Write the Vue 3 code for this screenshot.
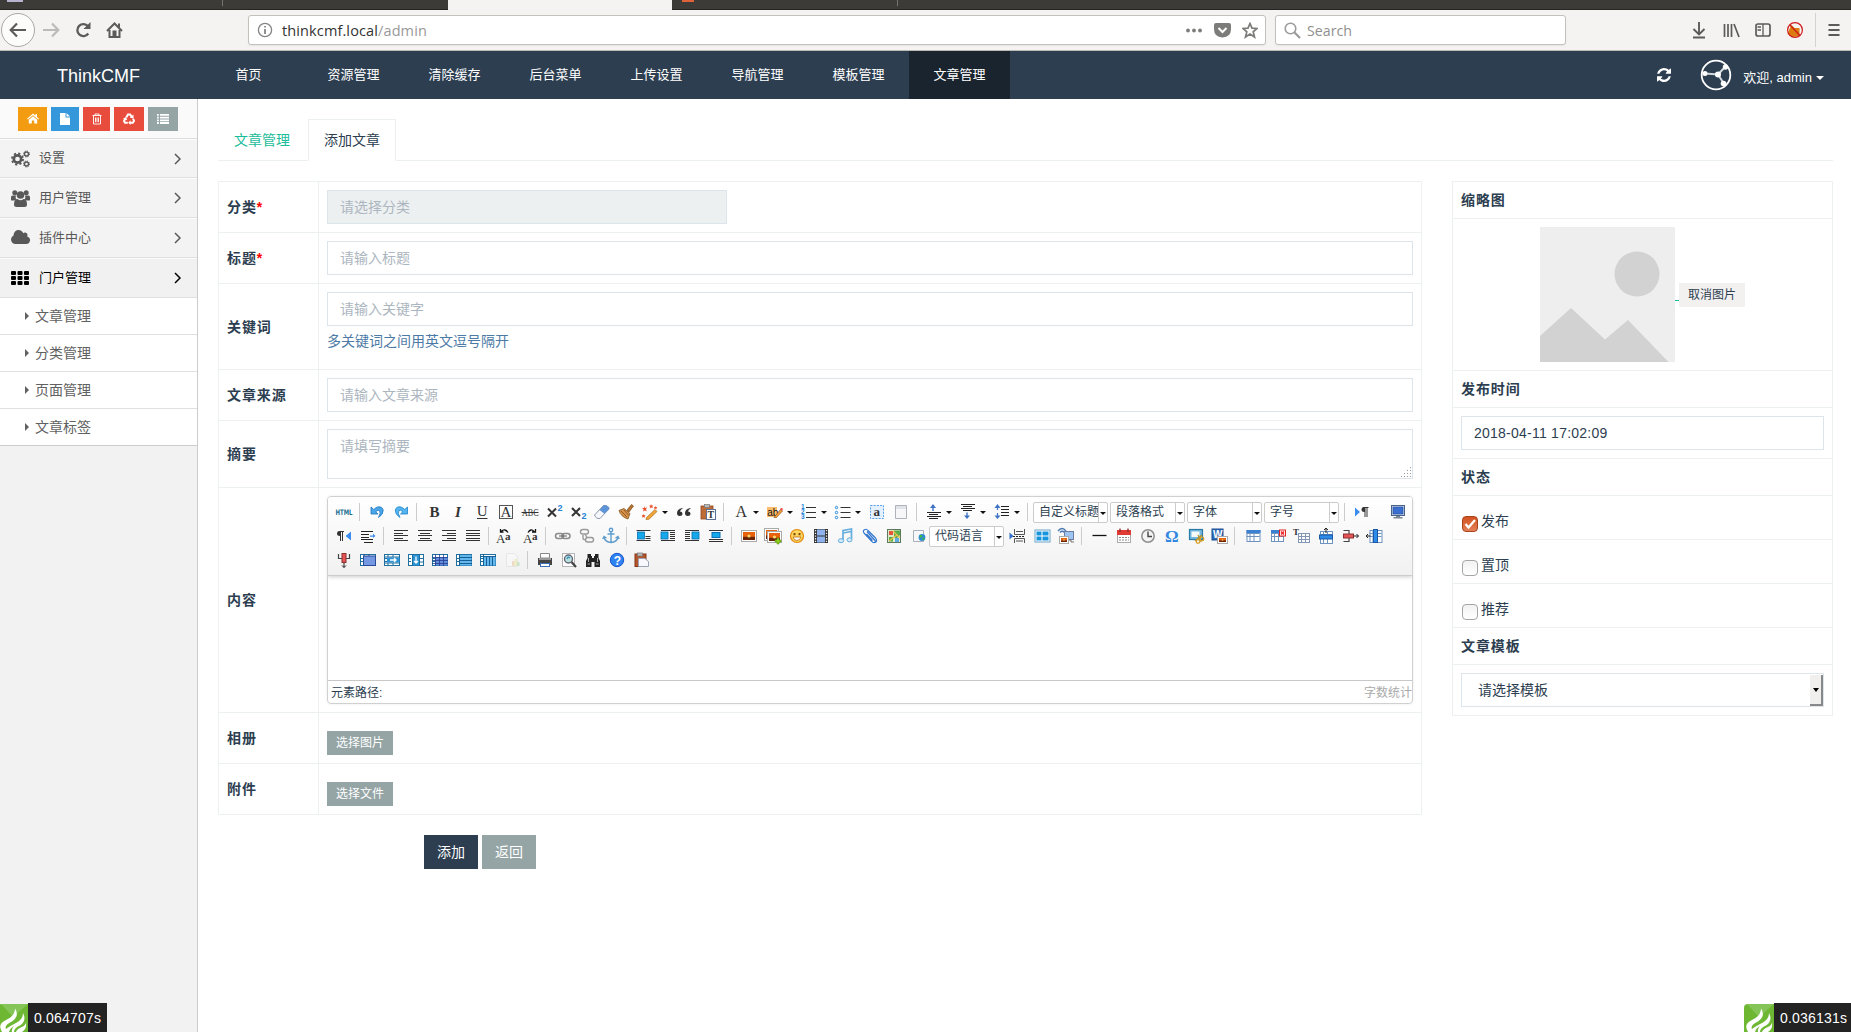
<script setup>
const navItems = ['首页', '资源管理', '清除缓存', '后台菜单', '上传设置', '导航管理', '模板管理', '文章管理']
const subItems = ['文章管理', '分类管理', '页面管理', '文章标签']

const gear = (x, y, r) =>
  `<circle cx="${x}" cy="${y}" r="${r}" fill="none" stroke="currentColor" stroke-width="${r * 0.72}"/><circle cx="${x}" cy="${y}" r="${r * 1.5}" fill="none" stroke="currentColor" stroke-width="${r * 0.5}" stroke-dasharray="${r * 0.59} ${r * 0.588}"/>`

const menuIcons = {
  cogs: gear(6.5, 9, 3.7) + gear(15.5, 4, 2) + gear(15.5, 14, 2),
  group: '<circle cx="3.8" cy="3.8" r="2.5"/><circle cx="15.2" cy="3.8" r="2.5"/><path d="M0 11V8.500Q0 6.500 1.500 6.500H5Q4 9 5.500 10.500L3.500 11.500H1.500Q0 11.500 0 11zM19 11V8.500Q19 6.500 17.500 6.500H14Q15 9 13.500 10.500L15.500 11.500H17.500Q19 11.500 19 11z"/><circle cx="9.500" cy="6" r="3.800"/><path d="M3 15.500Q3 10 6.500 10Q9.500 12.500 12.500 10Q16 10 16 15.500Q16 18 13.500 18H5.500Q3 18 3 15.500z"/>',
  cloud: '<path transform="translate(-.6,-.2) scale(.0099)" d="M1984 1152q0 159-112.500 271.500t-271.500 112.500h-1088q-185 0-316.500-131.500t-131.500-316.500q0-132 71-241.500t187-163.500q-2-28-2-43 0-212 150-362t362-150q158 0 286.500 88t187.500 230q70-62 166-62 106 0 181 75t75 181q0 75-41 138 129 30 213 134.500t84 239.500z"/>',
  th: [0, 1, 2].map(r => [0, 1, 2].map(c => `<rect x="${c * 6.5}" y="${2 + r * 5}" width="5" height="4" rx="1"/>`).join('')).join('')
}
const menu = [
  { icon: 'cogs', label: '设置' },
  { icon: 'group', label: '用户管理' },
  { icon: 'cloud', label: '插件中心' },
  { icon: 'th', label: '门户管理', active: true }
]

const quick = [
  { w: 29, c: '#f39c12', svg: '<path d="M6 0.500L0 5.700L.8 6.600L6 2.200L11.200 6.600L12 5.700L10 4V1H8.500V2.600z"/><path d="M1.800 6.700L6 3.200L10.200 6.700V10.500H7.200V7.500H4.800V10.500H1.800z"/>' },
  { w: 28, c: '#3498db', svg: '<path d="M1 0H6.500V4.500H11V12H1z"/><path d="M7.500 0L11 3.500H7.500z"/>' },
  { w: 27, c: '#e74c3c', svg: '<path d="M1.500 2.500H10.500M4 2.500V1H8V2.500M2.500 2.500V11H9.500V2.500M4.500 4.500V9.200M6 4.500V9.200M7.500 4.500V9.200" fill="none" stroke="#fff" stroke-width=".9"/>' },
  { w: 30, c: '#e74c3c', svg: '<path d="M3.200 4.500L5 1.500H7.200L8.800 4M10 5.500L11 8L9.800 9.800H7M4.800 9.800H2L1 8L2.300 5.500" fill="none" stroke="#fff" stroke-width="2"/><path d="M6.800 4.800L10.500 5.200V1.500zM7.500 7.300V12L5.200 9.800zM0 5.800L3 4L4.300 7.300z"/>' },
  { w: 30, c: '#95a5a6', svg: '<path d="M0 1H1.800V2.800H0zM3 1H12V2.800H3zM0 3.700H1.800V5.500H0zM3 3.700H12V5.500H3zM0 6.400H1.800V8.200H0zM3 6.400H12V8.200H3zM0 9.100H1.800V10.900H0zM3 9.100H12V10.900H3z"/>' }
]

// helpers for the editor toolbar glyphs (20 x 20 canvas)
const T = (x, y, s, t, extra = '') => `<text x="${x}" y="${y}" font-size="${s}" ${extra}>${t}</text>`
const serif = 'font-family="Liberation Serif" fill="#333"'
const lines = (arr, color = '#333') => arr.map(([x, y, w]) => `<rect x="${x}" y="${y}" width="${w}" height="1" fill="${color}"/>`).join('')
const shift = (dx, s) => `<g transform="translate(${dx},0)">${s}</g>`
const table = (fill, inner) =>
  `<rect x="2.500" y="4.500" width="15" height="11" fill="#fff" stroke="#1f6f9f"/><path d="M2 8.500H5M2 11.500H5" stroke="#1f6f9f"/>${fill}${inner}`
const grid = (x, y, w, h, c = '#6f93bf') =>
  `<rect x="${x + .5}" y="${y + .5}" width="${w}" height="${h}" fill="#fff" stroke="${c}"/><path d="M${x} ${y + 3.500}H${x + w}M${x} ${y + 6.500}H${x + w}M${x + 3.500} ${y}V${y + h}M${x + 7.500} ${y}V${y + h}" stroke="${c}" fill="none"/>`
const photo = (x, y, w, h) =>
  `<rect x="${x - 1.500}" y="${y - 1.500}" width="${w + 3}" height="${h + 3}" fill="#fff" stroke="#aaa"/><rect x="${x}" y="${y}" width="${w}" height="${h}" fill="#e8620c"/><rect x="${x}" y="${y + h * .6}" width="${w}" height="${h * .4}" fill="#6b2408"/><circle cx="${x + w * .5}" cy="${y + h * .5}" r="${h * .2}" fill="#ffd66b"/>`
const wrapImg = (x, l) => `<rect x="${x}" y="6" width="7" height="7" fill="#15a8ea" stroke="#0b6fb5" stroke-width=".8"/>` + lines(l)
const mark = '<path d="M0 0H6V1H5V10H4V1H3V10H2V5Q-1 5 -1 2.500Q-1 0 1 0z" fill="#333"/>'

const icons = {
  html: T(1.500, 13, 7.500, 'HTML', 'font-family="DejaVu Sans" font-weight="bold" fill="#1c7193" textLength="17" lengthAdjust="spacingAndGlyphs"'),
  undo: shift(1, '<path d="M3 5V12H10L7.700 9.800Q10 7.300 11.600 8.600Q13 11 10.500 15.500Q15.500 12.500 15.200 8Q14 4 9.500 5Q7.500 5.800 5.800 7.500z" fill="#4aa8ea" stroke="#1b74bd" stroke-width=".8"/>'),
  redo: shift(.5, '<path d="M16 5V12H9L11.300 9.800Q9 7.300 7.400 8.600Q6 11 8.500 15.500Q3.500 12.500 3.800 8Q5 4 9.500 5Q11.500 5.800 13.200 7.500z" fill="#55b5ee" stroke="#1b84cd" stroke-width=".8"/>'),
  bold: T(5.500, 15, 15, 'B', serif + ' font-weight="bold"'),
  italic: T(7, 15, 15, 'I', serif + ' font-style="italic" font-weight="bold"'),
  underline: T(4.700, 14, 15, 'U', serif) + '<path d="M5 16.500H15.500" stroke="#333"/>',
  fontborder: '<rect x="3.500" y="3.500" width="13" height="13" fill="none" stroke="#555"/>' + T(4.500, 15, 15, 'A', serif),
  strike: T(2, 14, 11, 'ABC', serif + ' textLength="16.500" lengthAdjust="spacingAndGlyphs"') + '<path d="M1.500 10.500H18.500" stroke="#333"/>',
  sup: '<path d="M4 6.500L12 14.500M12 6.500L4 14.500" stroke="#333" stroke-width="2"/>' + T(13.500, 9, 9, '2', 'font-family="Liberation Sans" font-weight="bold" fill="#2583d8"'),
  sub: '<path d="M4 6L12 14M12 6L4 14" stroke="#333" stroke-width="2"/>' + T(13.500, 17, 9, '2', 'font-family="Liberation Sans" font-weight="bold" fill="#2583d8"'),
  eraser: '<path d="M2.500 13L11.500 3.500Q14 2.500 17 5.500V7L8 16.500Q4 17 2.500 13z" fill="#f5f7fb" stroke="#8b96a8"/><path d="M7.500 8L11.500 3.500Q14 2.500 17 5.500V7L12.500 11.800z" fill="#5d93d8"/>',
  brush: '<path d="M11 8L15.500 2.500L17.500 4L13 10z" fill="#b5742f" stroke="#7e4b18" stroke-width=".7"/><path d="M3 8.500L8 6.500L14 11.500L12 17Q5 15 3 8.500z" fill="#d6924a" stroke="#82521c" stroke-width=".8"/><path d="M5 9L11 15M8 8L12.500 13" stroke="#7e4b18" stroke-width=".8"/>',
  wand: '<path d="M6.500 15.500L15 7.500L17 9.500L9 17.200L6 17.500z" fill="#f2a536" stroke="#a86b1d" stroke-width=".7"/><g fill="#e9532d"><path d="M4 4l1 2 2-.5-1 2 1 2-2-1-2 1 .6-2-1.600-1.500h2z"/><path d="M11 2l.7 1.500h1.600l-1 1.200.5 1.500-1.600-.8-1.500.8.400-1.500-1-1.200h1.500zM15.500 4l.5 1.100h1.200l-.7.900.2 1.300-1.200-.6-1.200.6.300-1.300-.9-.9h1.300z"/><path d="M3.500 12l.6 1.200h1.500l-.9 1 .4 1.600-1.500-.8-1.500.8.300-1.600-.9-1h1.400z"/></g>',
  quote: '<path d="M8.500 6Q3 7 3 11Q3 14 5.700 14Q8.500 14 8.500 11.500Q8.300 9.500 6 9.500Q6.500 7.500 8.500 6.800zM16.500 6Q11 7 11 11Q11 14 13.700 14Q16.500 14 16.500 11.500Q16.300 9.500 14 9.500Q14.500 7.500 16.500 6.800z" fill="#333"/>',
  pastetext: '<rect x="3" y="4" width="12" height="13" fill="#bd6c37" stroke="#93451e" stroke-width=".8"/><rect x="6.500" y="2.500" width="5" height="3" fill="#bbb" stroke="#777" stroke-width=".7"/><rect x="8.500" y="7.500" width="9" height="10" fill="#fff" stroke="#5a7298"/>' + T(9.500, 16, 10, 'T', serif + ' font-weight="bold"'),
  color: T(4.500, 14.500, 16, 'A', serif),
  back: '<rect x="2" y="5" width="10" height="10" fill="#fbbd6c"/>' + T(2.300, 13.500, 10, 'ab', 'font-family="Liberation Sans" fill="#111"') + '<path d="M9 15.500L15.500 7.500L17.500 9L11.500 15.500z" fill="#f2a536" stroke="#91532a" stroke-width=".7"/><circle cx="16.500" cy="7.300" r="1.300" fill="#e55"/>',
  ol: shift(1, [3, 8, 13].map((y, i) => T(1, y + 4, 6.500, i + 1, 'font-family="Liberation Sans" font-weight="bold" fill="#2583d8"')).join('') + lines([[6, 5, 10], [6, 10, 10], [6, 15, 10]])),
  ul: shift(.5, [5, 10, 15].map(y => `<circle cx="3" cy="${y + .5}" r="1.200" fill="#fff" stroke="#2583d8"/>`).join('') + lines([[7, 5, 10], [7, 10, 10], [7, 15, 10]])),
  selall: '<rect x="3.500" y="3.500" width="13" height="13" fill="#e2f0ff" stroke="#5a9fe8" stroke-dasharray="2 1.200"/>' + T(6.500, 13.500, 13, 'a', serif + ' font-weight="bold"'),
  page: '<path d="M4.500 3.500H15.500V16.500H4.500z" fill="#f7f7f9" stroke="#aeb2ba"/><path d="M5 4H15V7H5z" fill="#dfe3ea"/>',
  rowup: shift(1, '<path d="M8 2L5 6H7.300V9H8.700V6H11z" fill="#3f73c4"/>' + lines([[2, 10, 14], [4, 12, 9], [2, 14, 14], [4, 16, 9]], '#222')),
  rowdown: shift(1, lines([[2, 2, 14], [4, 4, 9], [2, 6, 14], [4, 8, 9]], '#222') + '<path d="M8 17L5 13.500H7.300V10.500H8.700V13.500H11z" fill="#3f73c4"/>'),
  lineh: shift(.5, '<path d="M5 2L2 6H4.400V8H5.600V6H8zM5 17L2 13.500H4.400V11H5.600V13.500H8z" fill="#3f73c4"/>' + lines([[8.500, 4, 8], [8.500, 7, 8], [8.500, 10, 8], [8.500, 13, 8]], '#222')),
  ltr: '<path d="M3 5.500L8 10L3 14.500z" fill="#3c8df0"/><g transform="translate(10.500,5)">' + mark + '</g>',
  rtl: '<g transform="translate(4,5)">' + mark + '</g><path d="M17 5.500L11.500 10L17 14.500z" fill="#3c8df0"/>',
  monitor: '<rect x="3.500" y="3.500" width="13" height="10" fill="#c9d7ea" stroke="#4a6386"/><rect x="5" y="5" width="10" height="7" fill="#3a6fd0" stroke="#234a99" stroke-width=".6"/><path d="M8 14H12V15H14.500V16.500H5.500V15H8z" fill="#7b8797"/>',
  indent: lines([[3, 5, 12], [3, 8, 8], [3, 11, 8], [3, 13, 12], [6, 16, 9]], '#222') + '<path d="M12 9.500H15V7.500L17.500 10L15 12V10.700H12z" fill="#3c8df0"/>',
  left: lines([[3, 4, 14], [3, 7, 9], [3, 9, 14], [3, 12, 9], [3, 14, 14]]),
  center: lines([[3, 4, 14], [5, 7, 10], [3, 9, 14], [5, 12, 10], [3, 14, 14]]),
  right: lines([[3, 4, 14], [8, 7, 9], [3, 9, 14], [8, 12, 9], [3, 14, 14]]),
  justify: lines([[3, 4, 14], [3, 7, 14], [3, 9, 14], [3, 12, 14], [3, 14, 14]]),
  upper: T(0, 16.500, 13, 'A', serif) + T(9, 13.500, 11, 'a', serif + ' font-weight="bold"') + '<path d="M5 5.500Q9 2 12 6.500M4.500 3V6H7.500" fill="none" stroke="#111" stroke-width="1.300"/>',
  lower: T(3, 16.500, 13, 'A', serif) + T(12, 13.500, 11, 'a', serif + ' font-weight="bold"') + '<path d="M14 5.500Q11 2 8 6.500M15.500 3V6H12" fill="none" stroke="#111" stroke-width="1.300"/>',
  link: '<g fill="none" stroke="#8c8c8c" stroke-width="1.500"><rect x="2.500" y="7.500" width="8" height="5" rx="2.500"/><rect x="9" y="7.500" width="8" height="5" rx="2.500"/></g><path d="M6 10H14" stroke="#666"/>',
  unlink: '<g fill="none" stroke="#999" stroke-width="1.400"><rect x="3.500" y="3.500" width="8" height="4.500" rx="2.200"/><path d="M8 8L10 11.500"/><rect x="8.500" y="11.500" width="8" height="4.500" rx="2.200"/><path d="M6 9V12Q6 14 8.500 13.500"/></g>',
  anchor: '<g fill="none" stroke="#5f9dce" stroke-width="1.400"><circle cx="10" cy="4" r="1.700"/><path d="M10 6V16.500M6.500 8H13.500M3 11Q4 16 10 16.500Q16 16 17 11M1.800 13L3 10.500L5.500 12M18.200 13L17 10.500L14.500 12"/></g>',
  imgnone: shift(.5, wrapImg(3, [[2, 4, 14], [11, 10, 5], [11, 12, 5], [2, 14, 14]])),
  imgleft: wrapImg(3, [[3, 4, 14], [12, 6, 5], [12, 8, 5], [12, 10, 5], [12, 12, 5], [3, 14, 14]]),
  imgright: wrapImg(10, [[3, 4, 14], [3, 6, 5], [3, 8, 5], [3, 10, 5], [3, 12, 5], [3, 14, 14]]),
  imgcenter: '<rect x="6" y="6.500" width="8" height="5" fill="#15a8ea" stroke="#0b6fb5"/>' + lines([[3, 4, 14], [3, 13, 14], [3, 15, 14]]),
  image: photo(4, 6, 12, 8),
  images: photo(3, 4, 11, 9) + photo(6, 7, 11, 8) + '<path d="M14 12H16V14H18V16H16V18H14V16H12V14H14z" fill="#8fd01a" stroke="#5c970b" stroke-width=".6"/>',
  smile: '<circle cx="10" cy="10" r="6.500" fill="#fdd65e" stroke="#e2880f" stroke-width="1.200"/><path d="M6.500 7H8.500V9.200H6.500zM11.500 7H13.500V9.200H11.500z" fill="#82480a"/><path d="M6 11H14Q13 14.500 10 14.500Q7 14.500 6 11z" fill="#fff" stroke="#b86a0a" stroke-width=".8"/>',
  film: '<rect x="3" y="3" width="14" height="14" fill="#333"/><rect x="6" y="3.500" width="8" height="6" fill="#8fb2ec"/><rect x="6" y="10.500" width="8" height="6" fill="#8fb2ec"/><path d="M4.500 4V16.500M15.500 4V16.500" stroke="#eee" stroke-width="1.300" stroke-dasharray="1.300 1.400"/>',
  music: shift(.5, '<g fill="none" stroke="#66aede" stroke-width="1.700"><path d="M7.500 14V4.500L16 3V13M7.500 7L16 5.500"/></g><ellipse cx="5.500" cy="14.700" rx="2.700" ry="2" fill="#d3ebfc" stroke="#66aede"/><ellipse cx="14" cy="13.800" rx="2.500" ry="2" fill="#d3ebfc" stroke="#66aede"/>'),
  clip: shift(1, '<path d="M7 5.500L14.500 14Q16 16 14.500 16.500Q13 17 12 15.500L4 7Q2.500 5 4.500 3.700Q6.500 2.500 8 4.500L15.500 12Q17.500 14.500 15.500 16.500M6.500 8L12.500 14.500" fill="none" stroke="#3377cf" stroke-width="1.200"/>'),
  map: shift(1, '<rect x="3.500" y="3.500" width="13" height="13" fill="#dcebc8" stroke="#5d785c"/><rect x="5" y="5" width="4" height="4" fill="#e5543a"/><path d="M10 4.500H16V9L12 13L10 10zM5 11H9V15.500H5z" fill="#58ad4e"/><path d="M9 5L16 12M5 15L13 9" stroke="#f0be48" stroke-width="1.200"/><rect x="11" y="12" width="4" height="4" fill="#5faae2"/>'),
  gmap: shift(2, '<path d="M4.500 4.500H14.500V15.500H4.500z" fill="#f8f8fb" stroke="#aab0bb"/><circle cx="13" cy="11.500" r="3.400" fill="#2b8bd8"/><path d="M11 9Q13.500 8 13.500 10.500Q12 12.500 10.500 11.500zM13.500 12Q16 10.500 15.500 13L13.500 14.500z" fill="#46b548"/>'),
  pagebreak: '<path d="M1.500 6.500V13.500L5.500 10z" fill="#2e6fc8"/><path d="M6.500 3V8.500H16.500V3M6.500 17V12.500H16.500V17M8 5.500H15M8 15H15" fill="none" stroke="#555"/><path d="M5 10.500H17" stroke="#222" stroke-dasharray="2 1"/>',
  template: '<rect x="3" y="4" width="15" height="12" fill="#fff" stroke="#6aa4c8"/><rect x="4.500" y="5.500" width="5" height="4" fill="#1595dd"/><rect x="4.500" y="10.500" width="5" height="4" fill="#1595dd"/><rect x="10.500" y="5.500" width="6" height="4" fill="#1595dd"/><rect x="10.500" y="10.500" width="6" height="4" fill="#1595dd"/>',
  background: '<path d="M2 5Q6 0 10 5M4 6.500Q6 4 8.500 6.500" fill="none" stroke="#4776b2" stroke-width="1.300"/><rect x="8.500" y="5.500" width="9" height="8" fill="#9ec5f2" stroke="#6b7fa5"/><path d="M11 14H15V16H18" stroke="#777" fill="none"/>' + photo(5, 12, 6, 4),
  hr: '<path d="M3.500 9.500H17.500" stroke="#111" stroke-width="1.300"/>',
  date: shift(1, '<rect x="3.500" y="4.500" width="13" height="12" fill="#fff" stroke="#aaa"/><path d="M3 4H17V9H3z" fill="#e03a35"/><path d="M6 2.500V6M14 2.500V6" stroke="#8b2a2a" stroke-width="1.300"/><path d="M5 11.500H15M5 14H15" stroke="#888" stroke-dasharray="2 1"/>'),
  time: shift(1, '<circle cx="10" cy="10" r="6.200" fill="#f3f3f3" stroke="#8e8e8e" stroke-width="1.500"/><path d="M10 5.500V10.500H14" fill="none" stroke="#444" stroke-width="1.400"/>'),
  omega: T(4, 16, 17, 'Ω', 'font-family="Liberation Serif" font-weight="bold" fill="#3187e1"'),
  snap: shift(1, '<rect x="3.500" y="3.500" width="13" height="10" fill="#74b9df" stroke="#287ba6" stroke-width="1.200"/><rect x="5.500" y="5.500" width="8" height="5.500" fill="#f7fbfc"/><path d="M9 15L16 9M12 9L15 16" stroke="#b78d2d" stroke-width="1.200"/><circle cx="12" cy="15.500" r="1.800" fill="none" stroke="#d6a128" stroke-width="1.300"/><circle cx="16" cy="13" r="1.800" fill="none" stroke="#d6a128" stroke-width="1.300"/>'),
  word: '<rect x="3" y="3" width="11" height="11" fill="#2d6db9" stroke="#1b4d90"/>' + T(4, 12, 10, 'W', 'font-family="Liberation Sans" font-weight="bold" fill="#fff"') + photo(10, 12, 7, 4),
  table: shift(1.5, grid(3, 4, 13, 11) + '<path d="M3 4H17V7H3z" fill="#3a81d3"/>'),
  deltable: shift(3, grid(2, 4, 12, 11) + '<path d="M2 4H11V7H2z" fill="#3a81d3"/><rect x="10.500" y="4" width="6" height="6" fill="#fff" stroke="#d22" stroke-width="1"/><path d="M12 5.500L15 8.500M15 5.500L12 8.500" stroke="#e22" stroke-width="1.500"/>'),
  ttable: shift(2, grid(6, 7, 11, 9, '#8496b5') + T(1, 9, 9, 'T', serif + ' font-weight="bold"')),
  insrow: shift(2, grid(4, 5, 12, 12) + '<rect x="3.500" y="9" width="13" height="4" fill="#2d8bea" stroke="#1858a5"/><path d="M10 7V2M8 4L10 2L12 4" fill="none" stroke="#222"/>'),
  delrow: shift(2.5, '<path d="M3 4.500H8.500V8M3 15.500H8.500V12" fill="none" stroke="#444" stroke-width="1.200"/><rect x="3" y="8" width="10" height="4" fill="#e55556" stroke="#8e3030"/><path d="M13 10H18M16 8L18 10L16 12" fill="none" stroke="#222"/>'),
  inscol: shift(2.5, grid(5, 4, 12, 12) + '<rect x="9" y="3.500" width="4" height="13" fill="#2d8bea" stroke="#1858a5"/><path d="M6 10H1.500M3.500 8L1.500 10L3.500 12" fill="none" stroke="#222"/>'),
  delcol: '<path d="M4.500 4V8.500H8M15.500 4V8.500H12" fill="none" stroke="#444" stroke-width="1.200"/><rect x="8" y="3.500" width="4" height="9" fill="#e55556" stroke="#8e3030"/><path d="M10 13V17.500M8 15.500L10 17.500L12 15.500" fill="none" stroke="#222"/>',
  m1: table('<rect x="5.500" y="6" width="12" height="9.500" fill="#7499e2" stroke="#294b99"/>', '<path d="M6 4V6M11 4V6" stroke="#294b99"/>'),
  m2: table('<rect x="5" y="7.500" width="12.500" height="5" fill="#2b93d6"/>', '<path d="M2 7H18M2 13H18M6 4V7M11 4V7M6 13V16M11 13V16" stroke="#1f6f9f"/><path d="M8 10H14M12 8L14 10L12 12" fill="none" stroke="#fff" stroke-width="1.300"/>'),
  m3: table('<rect x="6.500" y="5" width="7" height="10.500" fill="#2b93d6"/>', '<path d="M6.500 4V16M13.500 4V16M14 8.500H18M14 12H18" stroke="#1f6f9f"/><path d="M10 6.500V13M8 11L10 13L12 11" fill="none" stroke="#fff" stroke-width="1.300"/>'),
  m4: table('<rect x="5" y="7" width="12.500" height="8.500" fill="#658bda"/>', '<path d="M2 7.500H18M2 10.500H18M2 13.500H18M5.500 4V16M9.500 4V16M13.500 4V16" stroke="#223f90" stroke-width=".8"/>'),
  m5: table('<rect x="5" y="5" width="12.500" height="10.500" fill="#62b7ed"/>', '<path d="M5.500 4V16M5 7.500H18M5 10.500H18M5 13.500H18" stroke="#155f96"/>'),
  m6: table('<rect x="5" y="7" width="12.500" height="8.500" fill="#62b7ed"/>', '<path d="M2 6.500H18M5.500 4V16M8.500 7V16M11.500 7V16M14.500 7V16" stroke="#155f96"/>'),
  chart: '<g opacity=".3"><path d="M4.500 3.500H12.500L15.500 7V16.500H4.500z" fill="#fff" stroke="#ccc"/><rect x="10" y="11" width="2.500" height="5" fill="#e9a35d"/><rect x="12.500" y="9" width="2.500" height="7" fill="#e3dc5e"/><rect x="15" y="12" width="2.500" height="4" fill="#6fc072"/></g>',
  print: '<path d="M5.500 3.500H14.500V8H5.500z" fill="#fff" stroke="#888"/><path d="M3 8H17V15H3z" fill="#444"/><path d="M4 8H16V10H4z" fill="#999"/><rect x="5.500" y="13.500" width="9" height="3" fill="#fff" stroke="#3b6eb2"/>',
  preview: '<rect x="3.500" y="3.500" width="12" height="13" fill="#fff" stroke="#b5b5b5"/><circle cx="9.500" cy="9" r="4" fill="#b9e2dc" stroke="#667" stroke-width="1.400"/><path d="M8 9Q9 6 11 8" stroke="#3b96c5" fill="none" stroke-width="1.500"/><path d="M12.500 12L17 17" stroke="#444" stroke-width="2.200"/>',
  find: '<path d="M4.500 4H8V6H9V8H11V6H12V4H15.500V8L17 11V17H11.500V12H8.500V17H3V11L4.500 8z" fill="#222"/><path d="M5.500 8V12M14.500 8V12M4.500 14H7M13 14H15.500" stroke="#aaa"/>',
  help: '<circle cx="10" cy="10" r="6.700" fill="#2f82f2" stroke="#1556ca"/>' + T(6.800, 14.500, 12, '?', 'font-family="Liberation Sans" font-weight="bold" fill="#fff"'),
  paste: '<rect x="4" y="4" width="11" height="12.500" fill="#b3562b" stroke="#843715"/><rect x="6.500" y="3" width="5" height="3" fill="#bbb" stroke="#777" stroke-width=".7"/><path d="M7.500 8.500H14L17.500 11.500V16.500H7.500z" fill="#f8f9fc" stroke="#9ca3b4"/>'
}

// "|" separator, "name+" button with drop-down arrow, "=text" combo box, ">" spacer
const rows = [
  'html | undo redo | bold italic underline fontborder strike sup sub eraser brush wand+ quote pastetext | color+ back+ ol+ ul+ selall page | rowup+ rowdown+ lineh+ | =自定义标题 =段落格式 =字体 =字号 | ltr > monitor',
  'rtl indent | left center right justify | upper lower | link unlink anchor | imgnone imgleft imgright imgcenter | image images smile film music clip map gmap =代码语言 pagebreak template background | hr date time omega snap word | table deltable ttable insrow delrow inscol',
  'delcol m1 m2 m3 m4 m5 m6 chart | print preview find help paste'
].map(r => r.split(' ').map(t => {
  if (t === '|') return { type: 'sep' }
  if (t === '>') return { type: 'gap' }
  if (t[0] === '=') return { type: 'combo', text: t.slice(1) }
  return { type: 'btn', name: t.replace('+', ''), drop: t.endsWith('+') }
}))
</script>

<template>
  <div class="screen">
    <div class="tabstrip">
      <div class="tabs-left"><i class="frag"></i><i class="tsep"></i></div>
      <div class="tab-current"></div>
      <div class="tabs-right"><i class="fav"></i><i class="tsep"></i></div>
    </div>

    <div class="chrome">
      <div class="back">
        <svg width="18" height="16" viewBox="0 0 18 16"><path d="M17 8H2M8 1.500L1.700 8L8 14.500" fill="none" stroke="#5c5b58" stroke-width="2.200" /></svg>
      </div>
      <svg class="fwd" width="18" height="16" viewBox="0 0 18 16"><path d="M1 8H16M10 1.500L16.300 8L10 14.500" fill="none" stroke="#bdbbb8" stroke-width="2.200" /></svg>
      <svg class="reload" width="17" height="16" viewBox="0 0 17 16"><path d="M13.300 11.500A6 6 0 1 1 13 4.300" fill="none" stroke="#5c5b58" stroke-width="2.300" /><path d="M15.500 0V7H8.500z" fill="#5c5b58" /></svg>
      <svg class="house" width="17" height="17" viewBox="0 0 17 17"><path d="M1 9L8.500 1.500L16 9" fill="none" stroke="#5c5b58" stroke-width="2" /><path d="M3.500 8V15H13.500V8" fill="none" stroke="#5c5b58" stroke-width="2" /><path d="M6.500 8.500H10.500V15H6.500zM12 1.500H14V6L12 4z" fill="#5c5b58" /></svg>
      <div class="urlbar">
        <svg width="16" height="16" viewBox="0 0 16 16"><circle cx="8" cy="8" r="6.600" fill="none" stroke="#858585" stroke-width="1.300" /><path d="M8 7V12M8 4V5.500" stroke="#858585" stroke-width="1.800" /></svg>
        <span class="url">thinkcmf.local<em>/admin</em></span>
        <svg class="dots" width="16" height="5" viewBox="0 0 16 5"><circle cx="2" cy="2.500" r="1.900" /><circle cx="8" cy="2.500" r="1.900" /><circle cx="14" cy="2.500" r="1.900" /></svg>
        <svg class="pocket" width="17" height="15" viewBox="0 0 17 15"><path d="M2 0H15Q17 0 17 2V6Q17 14 8.500 14.500Q0 14 0 6V2Q0 0 2 0z" fill="#7c7c7a" /><path d="M4.500 5L8.500 9L12.500 5" fill="none" stroke="#fff" stroke-width="2" /></svg>
        <svg class="star" width="16" height="17" viewBox="0 0 16 17"><path d="M8 1.500L10 6.200L15 6.500L11.200 9.800L12.500 15L8 12L3.500 15L4.800 9.800L1 6.500L6 6.200z" fill="none" stroke="#7c7c7a" stroke-width="1.700" /></svg>
      </div>
      <div class="search">
        <svg width="17" height="17" viewBox="0 0 17 17"><circle cx="6.500" cy="6.500" r="5.300" fill="none" stroke="#9b9b9b" stroke-width="1.600" /><path d="M10.300 10.300L16 16" stroke="#9b9b9b" stroke-width="2.200" /></svg>
        <span>Search</span>
      </div>
      <svg class="tools" width="158" height="36" viewBox="0 0 158 36">
        <g fill="none" stroke="#5c5b58" stroke-width="1.900">
          <path d="M12 10V22.500M6.500 17L12 22.500L17.500 17M6 25.500H18" />
          <path d="M37.500 12V25M41 12V25M44.500 12V25M47 12L52 25" stroke-width="1.700" />
          <rect x="69" y="12" width="14" height="12" rx="2" stroke-width="1.700" /><path d="M76 12V24M70.500 15H74M70.500 18H74" stroke-width="1.300" />
          <path d="M141.500 13H152.500M141.500 18H152.500M141.500 23H152.500" />
        </g>
        <path d="M102.500 17L104.500 13L107.500 16H112.500V24L105.500 25L100.500 22z" fill="#dc7b0e" />
        <circle cx="108" cy="18" r="7.400" fill="none" stroke="#cf1a1a" stroke-width="1.200" /><path d="M103 13L113 23.500" stroke="#cf1a1a" stroke-width="1.300" />
        <path d="M128.500 1V35" stroke="#d5d2cf" />
      </svg>
    </div>

    <header>
      <div class="brand">ThinkCMF</div>
      <nav><a v-for="(n, i) in navItems" :key="n" :class="{ first: i === 0, on: i === 7 }">{{ n }}</a></nav>
      <svg class="refresh" width="14" height="14" viewBox="0 0 1536 1536"><path fill="#fff" d="M1511 928q0 5-1 7-64 268-268 434.500t-478 166.500q-146 0-282.500-55t-243.500-157l-129 129q-19 19-45 19t-45-19-19-45v-448q0-26 19-45t45-19h448q26 0 45 19t19 45-19 45l-137 137q71 66 161 102t187 36q134 0 250-65t186-179q11-17 53-117 8-23 30-23h192q13 0 22.500 9.500t9.500 22.500zm25-800v448q0 26-19 45t-45 19h-448q-26 0-45-19t-19-45 19-45l138-138q-148-137-349-137-134 0-250 65t-186 179q-11 17-53 117-8 23-30 23h-199q-13 0-22.500-9.500t-9.500-22.500v-7q65-268 270-434.500t480-166.500q146 0 284 55.500t245 156.500l130-129q19-19 45-19t45 19 19 45z" /></svg>
      <svg class="avatar" width="32" height="32" viewBox="0 0 32 32"><circle cx="16" cy="16" r="14.300" fill="none" stroke="#fff" stroke-width="1.800" /><path d="M5 14.500L18 15.500L25 8M18 15.500L23.500 24" fill="none" stroke="#d5dade" stroke-width="2" /><circle cx="5" cy="14.500" r="2.500" fill="#fff" /><circle cx="18" cy="15.500" r="3" fill="#fff" /><circle cx="25.500" cy="8" r="2.700" fill="#fff" /><circle cx="23.500" cy="24.500" r="2.800" fill="#fff" /></svg>
      <span class="hello">欢迎, admin</span><i class="caret"></i>
    </header>

    <div class="body">
      <aside>
        <div class="quick">
          <span v-for="(q, i) in quick" :key="i" :style="{ width: q.w + 'px', background: q.c }">
            <svg width="12" height="12" viewBox="0 0 12 12" fill="#fff" v-html="q.svg"></svg>
          </span>
        </div>
        <div v-for="m in menu" :key="m.label" class="item" :class="{ active: m.active }">
          <svg class="mi" width="19" height="18" viewBox="0 0 19 18" fill="currentColor" v-html="menuIcons[m.icon]"></svg>
          <span>{{ m.label }}</span>
          <svg class="chev" width="7" height="12" viewBox="0 0 7 12"><path d="M1 1L6 6L1 11" fill="none" stroke="currentColor" stroke-width="1.500" /></svg>
        </div>
        <div v-for="s in subItems" :key="s" class="sub"><i></i><span>{{ s }}</span></div>
      </aside>

      <main>
        <div class="tabs"><a>文章管理</a><a class="cur">添加文章</a></div>
        <div class="cols">
          <div class="left">
            <div class="form">
              <div class="row" style="height: 51px"><label>分类<b>*</b></label><div class="cell"><div class="input short">请选择分类</div></div></div>
              <div class="row" style="height: 51px"><label>标题<b>*</b></label><div class="cell"><div class="input">请输入标题</div></div></div>
              <div class="row" style="height: 86px"><label>关键词</label><div class="cell"><div class="input">请输入关键字</div><p>多关键词之间用英文逗号隔开</p></div></div>
              <div class="row" style="height: 51px"><label>文章来源</label><div class="cell"><div class="input">请输入文章来源</div></div></div>
              <div class="row" style="height: 67px"><label>摘要</label><div class="cell"><div class="input area">请填写摘要
                <svg width="12" height="12" viewBox="0 0 12 12"><path d="M10 1h1v1h-1zM7 4h1v1h-1zM10 4h1v1h-1zM4 7h1v1h-1zM7 7h1v1h-1zM10 7h1v1h-1zM1 10h1v1h-1zM4 10h1v1h-1zM7 10h1v1h-1zM10 10h1v1h-1z" fill="#999" /></svg></div></div></div>
              <div class="row" style="height: 225px"><label>内容</label>
                <div class="cell">
                  <div class="editor">
                    <div class="toolbar">
                      <div v-for="(r, ri) in rows" :key="ri" class="trow">
                        <template v-for="(t, i) in r" :key="i">
                          <i v-if="t.type === 'sep'" class="sep"></i>
                          <i v-else-if="t.type === 'gap'" class="gap"></i>
                          <span v-else-if="t.type === 'combo'" class="combo"><span>{{ t.text }}</span><u></u></span>
                          <span v-else class="tb" :class="{ drop: t.drop }"><svg width="20" height="20" viewBox="0 0 20 20" v-html="icons[t.name]"></svg><i v-if="t.drop"></i></span>
                        </template>
                      </div>
                    </div>
                    <div class="paper"></div>
                    <div class="status"><span>元素路径:</span><em>字数统计</em></div>
                  </div>
                </div>
              </div>
              <div class="row" style="height: 51px"><label>相册</label><div class="cell btns"><span class="btn-sm">选择图片</span></div></div>
              <div class="row" style="height: 51px"><label>附件</label><div class="cell btns"><span class="btn-sm">选择文件</span></div></div>
            </div>
            <div class="actions"><span class="go">添加</span><span>返回</span></div>
          </div>

          <div class="side">
            <div class="h">缩略图</div>
            <div class="thumb">
              <svg width="135" height="135" viewBox="0 0 135 135"><rect width="135" height="135" fill="#eee" /><circle cx="97" cy="47" r="22.500" fill="#d2d2d2" /><path d="M0 109L31 81L65 112.500L88 93L128.500 135H0z" fill="#d2d2d2" /></svg>
              <i></i><span>取消图片</span>
            </div>
            <div class="h">发布时间</div>
            <div class="c"><div class="input date">2018-04-11 17:02:09</div></div>
            <div class="h">状态</div>
            <div class="ck"><i class="on"><svg width="16" height="16" viewBox="0 0 16 16"><path d="M3.500 8L6.500 11.500L13 4" fill="none" stroke="#fff" stroke-width="2.300" /></svg></i><span>发布</span></div>
            <div class="ck"><i></i><span>置顶</span></div>
            <div class="ck"><i></i><span>推荐</span></div>
            <div class="h">文章模板</div>
            <div class="c"><div class="input select"><span>请选择模板</span><u></u></div></div>
          </div>
        </div>
      </main>
    </div>

    <div v-for="(b, i) in ['0.064707s', '0.036131s']" :key="b" class="trace" :class="i ? 'tr-r' : 'tr-l'">
      <svg width="30" height="28" viewBox="0 0 30 28"><path d="M0 4Q0 0 4 0H30V28H0z" fill="#6db733" /><path d="M3 0H30L15 13z" fill="#85c557" /><path d="M4 28Q-1 20 8 16Q17 12 17 4.500Q22 12 14 17.500Q6 21 8 25Q10 23 17 19.500Q25 16 25 9Q29 17 22 21.500Q16 24 16 28H14Q13 25 16 22Q12 24 11 28zM18 28Q19 25 24 23Q28 21 28 18Q29 25 24 28z" fill="#fff" /></svg>
      <span>{{ b }}</span>
    </div>
  </div>
</template>

<style>
html, body { margin: 0; overflow: hidden; }
</style>

<style scoped>
* { box-sizing: border-box; }
i, em { font-style: normal; }
u { text-decoration: none; }
svg { display: block; flex: none; }
.screen { position: relative; width: 1851px; height: 1032px; overflow: hidden; background: #fff; color: #2c3e50; font: 14px/20px "Liberation Sans", "Noto Sans CJK SC", sans-serif; display: flex; flex-direction: column; }

.tabstrip { height: 10px; flex: none; display: flex; background: #f4f3f1; }
.tabs-left, .tabs-right { background: #3c3b37; border-bottom: 1px solid #262522; display: flex; }
.tabs-left { width: 448px; }
.tab-current { width: 224px; }
.tabs-right { flex: 1; }
.tsep { width: 1px; height: 6px; background: #75746f; }
.frag { width: 16px; height: 2px; margin: 0 199px 0 7px; background: #b9b3d2; }
.fav { width: 12px; height: 2px; margin: 0 203px 0 10px; background: #dd6237; }

.chrome { height: 41px; flex: none; display: flex; align-items: center; background: #f4f3f1; border-bottom: 1px solid #bdbab5; }
.back { width: 34px; height: 34px; margin-left: 1px; border: 1px solid #aaa8a5; border-radius: 50%; background: #fcfcfb; display: flex; align-items: center; justify-content: center; }
.fwd { margin-left: 7px; }
.reload { margin-left: 15px; }
.house { margin-left: 14px; }
.urlbar, .search { height: 30px; border: 1px solid #c4c1bc; border-radius: 3px; background: #fff; display: flex; align-items: center; font-family: "Open Sans", "Noto Sans", sans-serif; box-shadow: 0 1px 2px rgba(0, 0, 0, .06); }
.urlbar { width: 1018px; margin-left: 125px; padding-left: 8px; }
.url { margin: 1px 0 0 9px; font-size: 14.500px; color: #333; letter-spacing: .12px; }
.url em { color: #999; }
.dots { margin-left: auto; fill: #7c7c7a; }
.pocket { margin-left: 12px; }
.star { margin: 0 7px 0 11px; }
.search { width: 291px; margin-left: 9px; padding-left: 8px; color: #8f8f8f; }
.search span { margin: 1px 0 0 6px; font-size: 14.200px; }
.tools { margin-left: 121px; }

header { height: 48px; flex: none; display: flex; align-items: center; background: #2c3e50; color: #fff; }
.brand { width: 197px; padding-top: 2px; text-align: center; font-size: 18px; }
nav { display: flex; flex: 1; }
nav a { width: 101px; height: 48px; line-height: 48px; text-align: center; font-size: 13px; }
nav a.first { width: 105px; padding-right: 4px; margin-left: 1px; }
nav a.on { background: #1a242f; }
.avatar { margin-left: 29px; }
.hello { margin: 5px 4px 0 11px; font-size: 13px; }
.caret { margin: 5px 27px 0 0; border: 4px solid transparent; border-top-color: #fff; border-bottom: 0; }

.body { flex: 1; display: flex; min-height: 0; }
aside { width: 198px; background: #f2f2f2; border-right: 1px solid #ccc; }
.quick { height: 40px; padding: 8px 0 0 18px; display: flex; gap: 4px; background: #fafafa; border-bottom: 1px solid #ddd; }
.quick span { height: 24px; display: flex; align-items: center; justify-content: center; }
.item { height: 40px; display: flex; align-items: center; padding: 0 16px 0 11px; color: #585858; background: #f3f3f3; border-top: 1px solid #fcfcfc; border-bottom: 1px solid #e0e0e0; font-size: 13px; }
.quick + .item { height: 39px; }
.item span { margin: -1px auto 0 9px; }
.item.active { color: #000; background: #f1f1f1; }
.sub { height: 37px; display: flex; align-items: center; padding-left: 25px; color: #616161; background: #fff; border-bottom: 1px solid #e0e0e0; }
.sub:last-child { border-bottom-color: #ccc; }
.sub i { border: 4px solid transparent; border-left-color: #616161; border-right: 0; }
.sub span { margin: -1px 0 0 6px; }

main { flex: 1; padding: 20px 18px 0 20px; }
.tabs { height: 42px; display: flex; border-bottom: 1px solid #ecf0f1; }
.tabs a { width: 88px; padding: 0 0 0 15px; height: 42px; line-height: 41px; color: #1abc9c; border: 1px solid transparent; }
.tabs a:first-child { width: 91px; }
.tabs a.cur { color: #2c3e50; background: #fff; border-color: #ecf0f1; border-bottom-color: #fff; margin-left: -1px; }
.cols { display: flex; justify-content: space-between; margin-top: 20px; }
.left { width: 1204px; }
.form { border: 1px solid #ecf0f1; border-bottom: 0; }
.row { display: flex; border-bottom: 1px solid #ecf0f1; }
label { width: 100px; padding-left: 8px; border-right: 1px solid #ecf0f1; display: flex; align-items: center; font-weight: bold; letter-spacing: .9px; }
label b { color: #f00; }
.cell { flex: 1; padding: 8px; min-width: 0; }
.input { height: 34px; padding: 0 12px; line-height: 32px; border: 1px solid #dce4ec; color: #acb6c0; }
.input.short { width: 400px; background: #ecf0f1; }
.area { position: relative; height: 50px; }
.area svg { position: absolute; right: 0; bottom: 0; }
p { margin: 5px 0 0; color: #4d7aa5; }

.editor { height: 208px; border: 1px solid #d0d0d0; border-radius: 4px; overflow: hidden; box-shadow: 0 0 3px rgba(0, 0, 0, .08); }
.toolbar { height: 79px; padding: 3px 0 0 4px; background: linear-gradient(#fff, #f1f1f1); border-bottom: 1px solid #ccc; box-shadow: 0 1px 4px rgba(0, 0, 0, .2); }
.trow { height: 24px; display: flex; align-items: center; }
.tb { width: 24px; height: 24px; flex: none; padding: 2px; display: flex; align-items: center; }
.tb svg { overflow: visible; }
.tb.drop { width: 34px; }
.tb i { margin: 1px 0 0 2px; border: 3px solid transparent; border-top-color: #111; border-bottom: 0; flex: none; }
.sep { width: 1px; height: 18px; margin: 0 5px 0 3px; background: #ccc; flex: none; }
.gap { width: 12px; flex: none; }
.combo { width: 75px; height: 21px; margin: 0 2px 0 0; border: 1px solid #ccc; border-radius: 2px; background: #fff; display: flex; flex: none; font-size: 12px; line-height: 19px; }
.combo span { width: 65px; flex: none; overflow: hidden; white-space: nowrap; border-right: 1px solid #ccc; text-indent: 5px; padding-right: 3px; }
.combo u { margin: 9px 0 0 1px; border: 3px solid transparent; border-top-color: #111; border-bottom: 0; width: 0; height: 3px; }
.paper { height: 104px; }
.status { height: 23px; padding: 0 0 0 3px; display: flex; justify-content: space-between; font-size: 12px; line-height: 24px; border-top: 1px solid #c8c8c8; }
.status em { color: #aaa; }
.btns { padding-top: 18px; }
.btn-sm { display: block; width: 66px; height: 24px; line-height: 24px; text-align: center; font-size: 12px; color: #fff; background: #95a5a6; }
.actions { display: flex; gap: 4px; margin: 20px 0 0 206px; }
.actions span { width: 54px; height: 34px; line-height: 34px; text-align: center; color: #fff; background: #95a5a6; }
.actions .go { background: #2c3e50; }

.side { width: 381px; align-self: flex-start; border: 1px solid #ecf0f1; border-bottom: 0; }
.side > div { border-bottom: 1px solid #ecf0f1; }
.h { height: 37px; padding-left: 8px; line-height: 36px; font-weight: bold; letter-spacing: .9px; }
.thumb { height: 152px; display: flex; align-items: center; padding-left: 87px; }
.thumb i { width: 4px; height: 1px; margin-top: 11px; background: #1abc9c; }
.thumb span { width: 66px; height: 24px; line-height: 24px; font-size: 12px; text-align: center; background: #f2f1f0; }
.c { height: 51px; padding: 8px; }
.date { color: #2c3e50; padding-left: 12px; letter-spacing: .24px; }
.ck { height: 44px; display: flex; padding-left: 9px; }
.ck i { width: 16px; height: 16px; margin-top: 20px; border: 1px solid #a5a5a5; border-radius: 4px; background: linear-gradient(#f2f2f2, #fff); }
.ck i.on { border-color: #a9431c; background: linear-gradient(#d3521f, #e38058); }
.ck i svg { margin: -1px; }
.ck span { margin: 15px 0 0 3px; }
.select { color: #2c3e50; display: flex; justify-content: space-between; padding: 0 0 0 16px; line-height: 33px; }
.select u { width: 13px; height: 31px; margin-top: 1px; background: #f0efee; border-right: 2px solid #888; border-bottom: 2px solid #888; position: relative; }
.select u::after { content: ""; position: absolute; left: 3px; top: 13px; border: 3px solid transparent; border-top: 4px solid #000; border-bottom: 0; }

.trace { position: absolute; bottom: 0; display: flex; align-items: flex-end; }
.trace span { height: 29px; line-height: 30px; padding-left: 6px; width: 79px; color: #fff; background: #232323; letter-spacing: .2px; }
.tr-l { left: -2px; }
.tr-r { left: 1744px; }
.tr-r span { width: 77px; }
</style>
